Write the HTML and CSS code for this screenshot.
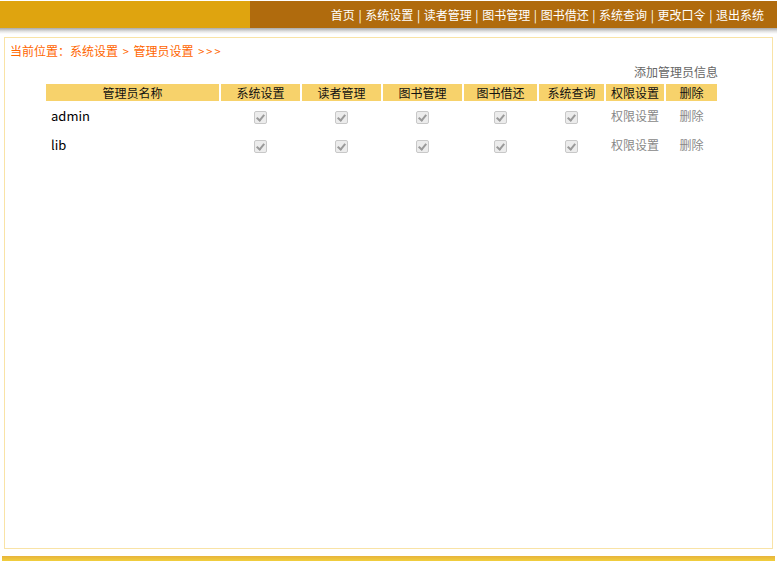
FILE: index.html
```html
<!DOCTYPE html>
<html lang="zh-CN">
<head>
    <meta charset="UTF-8">
    <title>管理员设置</title>
    <link rel="stylesheet" href="styles.css">
</head>
<body>
    <!-- 顶部导航 -->
    <div class="topbar">
        <div class="logo"></div>
        <div class="nav">首页<span class="sep">|</span>系统设置<span class="sep">|</span>读者管理<span class="sep">|</span>图书管理<span class="sep">|</span>图书借还<span class="sep">|</span>系统查询<span class="sep">|</span>更改口令<span class="sep">|</span>退出系统</div>
    </div>
    <div class="shadow"></div>

    <div class="main">
        <div class="crumb">当前位置<span class="colon">：</span>系统设置 <span class="arrow">&gt;</span> 管理员设置 <span class="arrow arrows">&gt;&gt;&gt;</span></div>
        <div class="add"><a href="#">添加管理员信息</a></div>
        <table class="list">
            <colgroup>
                <col style="width:173px">
                <col style="width:79px">
                <col style="width:79px">
                <col style="width:79px">
                <col style="width:73px">
                <col style="width:65px">
                <col style="width:58px">
                <col style="width:51px">
            </colgroup>
            <thead>
                <tr>
                    <th>管理员名称</th>
                    <th>系统设置</th>
                    <th>读者管理</th>
                    <th>图书管理</th>
                    <th>图书借还</th>
                    <th>系统查询</th>
                    <th>权限设置</th>
                    <th>删除</th>
                </tr>
            </thead>
            <tbody>
                <tr>
                    <td class="name">admin</td>
                    <td><input type="checkbox" checked disabled></td>
                    <td><input type="checkbox" checked disabled></td>
                    <td><input type="checkbox" checked disabled></td>
                    <td><input type="checkbox" checked disabled></td>
                    <td><input type="checkbox" checked disabled></td>
                    <td><a href="#">权限设置</a></td>
                    <td><a href="#">删除</a></td>
                </tr>
                <tr>
                    <td class="name">lib</td>
                    <td><input type="checkbox" checked disabled></td>
                    <td><input type="checkbox" checked disabled></td>
                    <td><input type="checkbox" checked disabled></td>
                    <td><input type="checkbox" checked disabled></td>
                    <td><input type="checkbox" checked disabled></td>
                    <td><a href="#">权限设置</a></td>
                    <td><a href="#">删除</a></td>
                </tr>
            </tbody>
        </table>
    </div>

    <div class="footer"></div>
</body>
</html>
```

FILE: styles.css
```css
body {
    margin: 0;
    padding: 0;
    font-family: "Noto Sans CJK SC", "Noto Sans", sans-serif;
    font-size: 12px;
    color: #000;
    background-color: #fff;
}

a {
    text-decoration: none;
}

/* 顶部导航 */
.topbar {
    display: flex;
    height: 27px;
    margin-top: 1px;
}

.logo {
    width: 250px;
    background-color: #dfa40f;
}

.nav {
    flex: 1;
    background-color: #b06b0d;
    color: #fff;
    text-align: right;
    padding-right: 13px;
    line-height: 27px;
    font-size: 12px;
    white-space: nowrap;
}

.sep {
    margin: 0 3.6px;
}

.shadow {
    height: 6px;
    background: linear-gradient(#a9a9a9, #e6e6e6 60%, #fff);
}

/* 主体 */
.main {
    margin: 3px 4px 0 4px;
    height: 510px;
    border: 1px solid #f9e3a6;
}

.crumb {
    color: #ff6600;
    padding: 5px 0 0 5px;
    line-height: 16px;
}

.colon {
    display: inline-block;
    width: 12px;
    text-align: center;
}

.arrow {
    font-size: 11px;
    margin: 0 2px;
}

.arrows {
    letter-spacing: 2px;
}

.add {
    width: 713px;
    text-align: right;
    margin-top: 5px;
    margin-bottom: 4px;
    line-height: 16px;
}

.add a {
    color: #666;
}

.list {
    table-layout: fixed;
    border-collapse: separate;
    border-spacing: 2px 0;
    margin: 0 0 0 39px;
}

.list th {
    background-color: #f7d26b;
    font-weight: normal;
    height: 17px;
    padding: 0;
    line-height: 17px;
    color: #111;
}

.list td {
    height: 29px;
    padding: 0;
    text-align: center;
    vertical-align: middle;
}

.list td.name {
    text-align: left;
    padding-left: 5px;
    font-size: 13px;
}

.list td a {
    color: #888;
}

/* 禁用的勾选框 */
.list input {
    -webkit-appearance: none;
    appearance: none;
    position: relative;
    margin: 0;
    width: 13px;
    height: 13px;
    vertical-align: middle;
    border: 1px solid #c8c8c8;
    border-radius: 2px;
    background-color: #ececec;
    box-sizing: border-box;
}

.list input:checked::after {
    content: "";
    position: absolute;
    left: 3px;
    top: 1px;
    width: 3px;
    height: 6px;
    border: solid #9a9a9a;
    border-width: 0 2px 2px 0;
    transform: rotate(40deg);
}

.footer {
    margin: 7px 2px 0 2px;
    height: 8px;
    background: linear-gradient(#e7b43c, #f7df3d);
}
```
